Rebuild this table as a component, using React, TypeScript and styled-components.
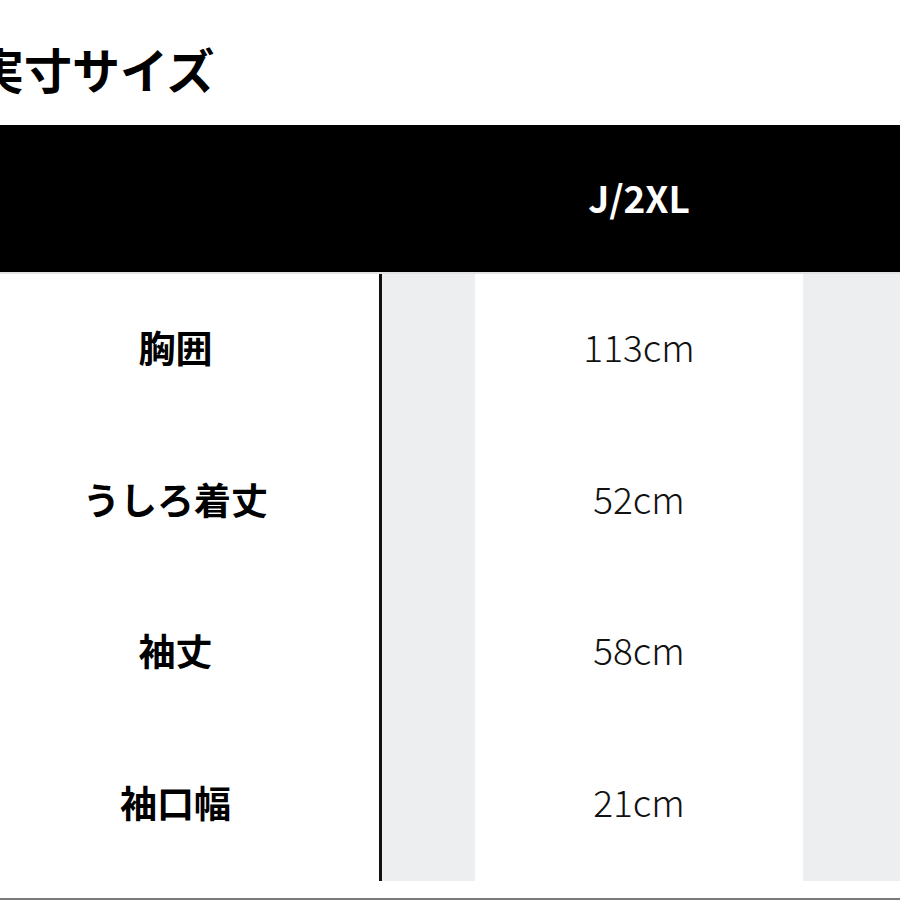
import React from 'react';
import styled, { createGlobalStyle } from 'styled-components';

const GlobalStyle = createGlobalStyle`
  html, body {
    margin: 0;
    padding: 0;
    background: #ffffff;
  }

  body {
    font-family: "Noto Sans CJK JP", "Noto Sans", sans-serif;
    overflow: hidden;
  }
`;

interface Row {
  label: string;
  value: string;
}

const ROWS: Row[] = [
  { label: '胸囲', value: '113cm' },
  { label: 'うしろ着丈', value: '52cm' },
  { label: '袖丈', value: '58cm' },
  { label: '袖口幅', value: '21cm' }
];

const Page = styled.div`
  width: 900px;
  height: 900px;
  display: flex;
  flex-direction: column;
  overflow: hidden;
  border-bottom: 2px solid #7a7a7a;
  box-sizing: border-box;
`;

const TitleBar = styled.div`
  height: 125px;
  display: flex;
  align-items: flex-start;
  padding-top: 44px;
  box-sizing: border-box;
`;

const Title = styled.h1`
  margin: 0 0 0 -24px;
  font-size: 48px;
  line-height: 48px;
  font-weight: 700;
  color: #000000;
  white-space: nowrap;
`;

const Header = styled.div`
  height: 147px;
  background: #000000;
  display: grid;
  grid-template-columns: 475px 328px 1fr;
  align-items: center;
  border-bottom: 2px solid #e2e2e2;
`;

const HeaderCell = styled.div`
  grid-column: 2;
  text-align: center;
  color: #ffffff;
  font-size: 37px;
  font-weight: 700;
  padding-bottom: 4px;
`;

const Body = styled.div`
  height: 607px;
  display: grid;
  grid-template-columns: 379px 3px 93px 328px 1fr;
  grid-template-rows: repeat(4, 1fr);
`;

const Divider = styled.div`
  grid-column: 2;
  grid-row: 1 / -1;
  background: #111111;
`;

const Stripe = styled.div<{ $col: number }>`
  grid-column: ${p => p.$col};
  grid-row: 1 / -1;
  background: #eceef0;
`;

const Label = styled.div<{ $row: number }>`
  grid-column: 1;
  grid-row: ${p => p.$row};
  display: flex;
  align-items: center;
  justify-content: center;
  padding: 0 28px 6px 0;
  font-size: 37px;
  font-weight: 700;
  color: #000000;
`;

const Value = styled.div<{ $row: number }>`
  grid-column: 4;
  grid-row: ${p => p.$row};
  display: flex;
  align-items: center;
  justify-content: center;
  padding-bottom: 8px;
  font-size: 37px;
  font-weight: 300;
  color: #111111;
`;

export default function App (): React.ReactElement {
  return (
    <>
      <GlobalStyle />
      <Page>
        <TitleBar>
          <Title>実寸サイズ</Title>
        </TitleBar>
        <Header>
          <HeaderCell>J/2XL</HeaderCell>
        </Header>
        <Body>
          <Divider />
          <Stripe $col={3} />
          <Stripe $col={5} />
          {ROWS.map((row, i) => (
            <React.Fragment key={row.label}>
              <Label $row={i + 1}>{row.label}</Label>
              <Value $row={i + 1}>{row.value}</Value>
            </React.Fragment>
          ))}
        </Body>
      </Page>
    </>
  );
}
